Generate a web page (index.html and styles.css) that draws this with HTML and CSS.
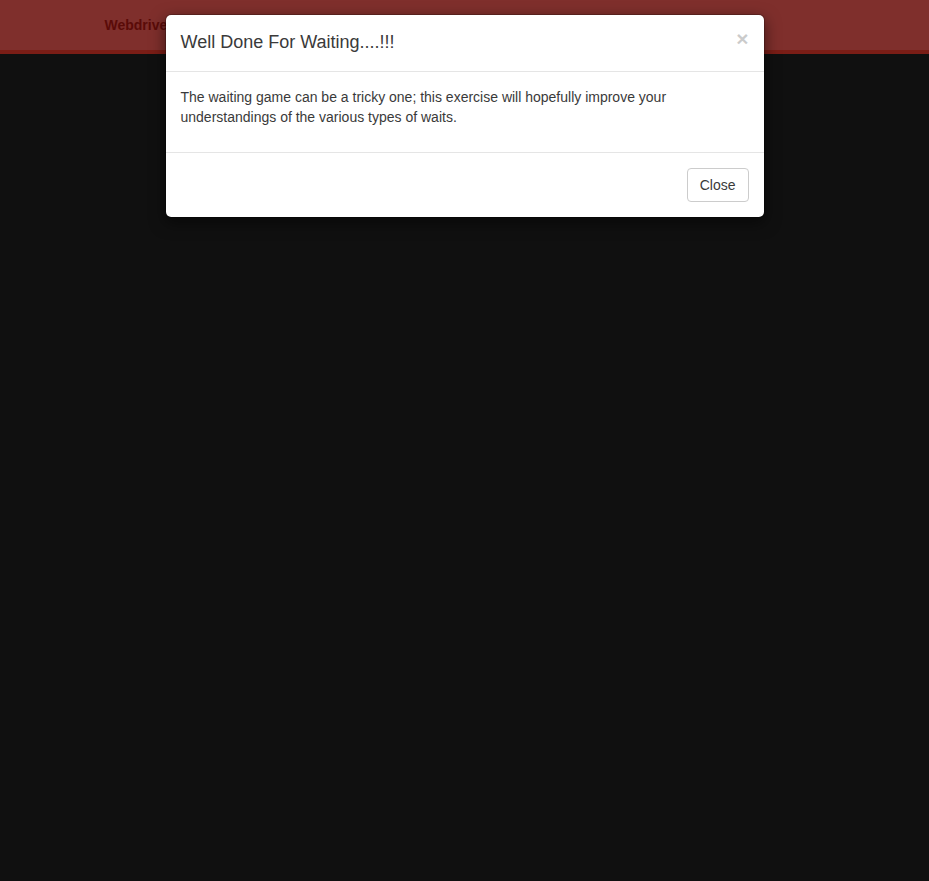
FILE: index.html
```html
<!DOCTYPE html>
<html>
<head>
<meta charset="utf-8">
<link rel="stylesheet" href="styles.css">
</head>
<body>
<nav class="navbar">
  <div class="container">
    <a class="brand">Webdriver</a>
  </div>
</nav>
<div class="modal">
  <div class="dialog">
    <div class="content">
      <div class="header">
        <button class="close">&times;</button>
        <h4 class="title">Well Done For Waiting....!!!</h4>
      </div>
      <div class="body">
        <p>The waiting game can be a tricky one; this exercise will hopefully improve your understandings of the various types of waits.</p>
      </div>
      <div class="footer">
        <button class="btn">Close</button>
      </div>
    </div>
  </div>
</div>
</body>
</html>
```
FILE: styles.css
```css
* { box-sizing: border-box; }
html, body { margin: 0; height: 100%; }
body {
  background: #101010;
  font-family: "Liberation Sans", Arial, sans-serif;
  font-size: 14px;
  line-height: 1.42857;
  color: #333;
}
.navbar {
  height: 54px;
  background: #7f2f2c;
  border-bottom: 4px solid #7a1d16;
}
.container {
  width: 750px;
  margin: 0 auto;
  padding: 0 15px;
}
.brand {
  display: inline-block;
  padding: 15px 0;
  font-weight: bold;
  font-size: 14px;
  line-height: 20px;
  color: #5a0b08;
}
.modal {
  position: absolute;
  top: 0; left: 0; right: 0; bottom: 0;
}
.dialog {
  width: 600px;
  margin: 14px auto 0;
}
.content {
  background: #fff;
  border: 1px solid rgba(0,0,0,.2);
  border-radius: 6px;
  box-shadow: 0 5px 15px rgba(0,0,0,.5);
  background-clip: padding-box;
}
.header {
  padding: 15px;
  border-bottom: 1px solid #e5e5e5;
}
.title {
  margin: 0;
  font-size: 18px;
  font-weight: normal;
  line-height: 1.42857;
  color: #3a3a3a;
}
.close {
  float: right;
  margin-top: -2px;
  padding: 0;
  border: 0;
  background: transparent;
  font-family: "Liberation Sans", Arial, sans-serif;
  font-size: 21px;
  font-weight: bold;
  line-height: 1;
  color: #000;
  opacity: .2;
  text-shadow: 0 1px 0 #fff;
}
.body { padding: 16px 15px 14px; color: #3a3a3a; }
.body p { margin: 0 0 10px; }
.footer {
  padding: 15px;
  text-align: right;
  border-top: 1px solid #e5e5e5;
}
.btn {
  display: inline-block;
  padding: 7px 12px 5px;
  font-family: "Liberation Sans", Arial, sans-serif;
  font-size: 14px;
  line-height: 1.42857;
  color: #3a3a3a;
  background: #fff;
  border: 1px solid #ccc;
  border-radius: 4px;
}
```
